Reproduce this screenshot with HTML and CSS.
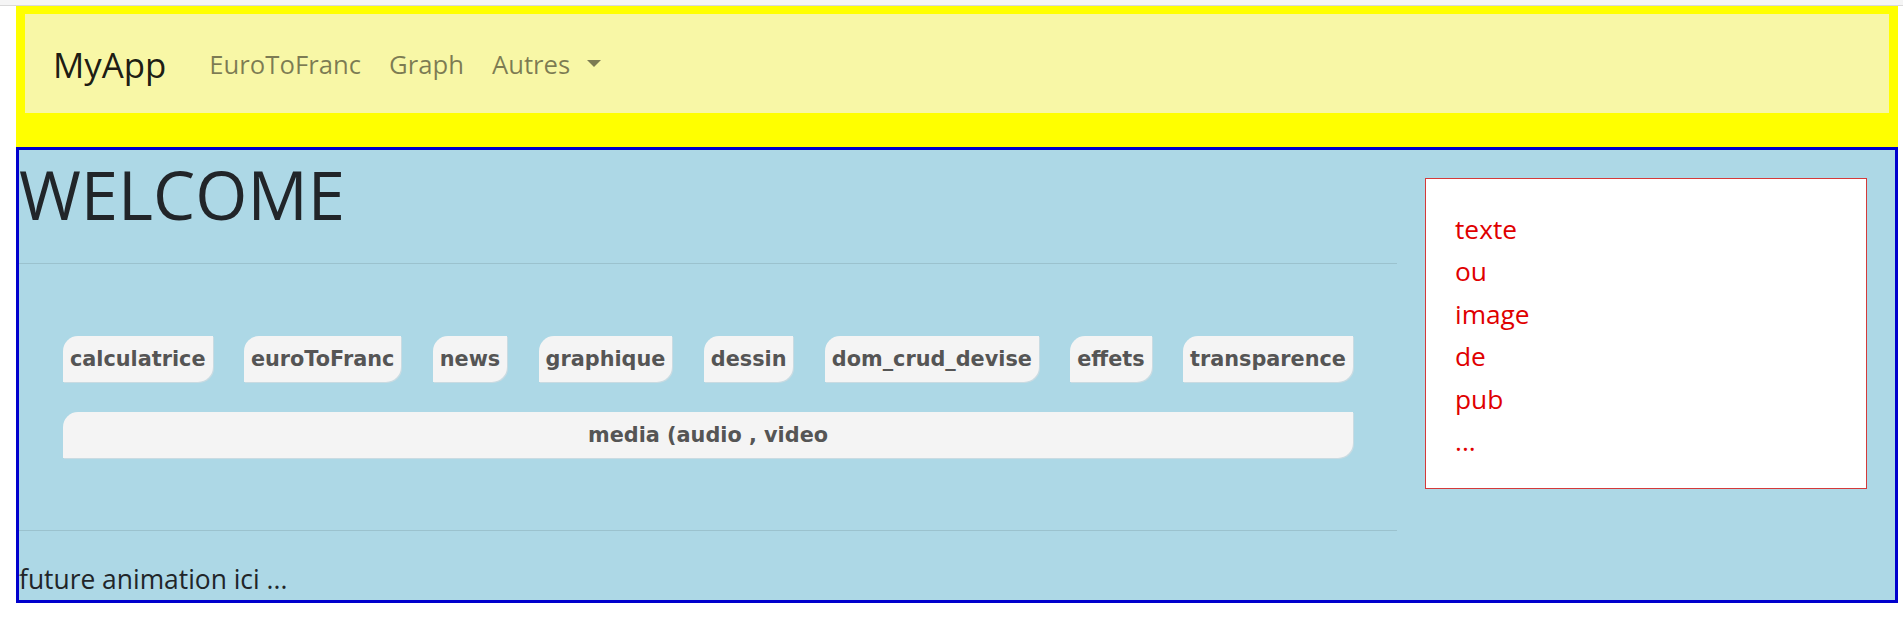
FILE: index.html
```html
<!DOCTYPE html>
<html lang="fr">
<head>
<meta charset="utf-8">
<title>MyApp</title>
<link rel="stylesheet" href="styles.css">
</head>
<body>
<div class="topstrip"></div>
<div class="page">
  <header class="header">
    <nav class="navbar">
      <a class="brand" href="#">MyApp</a>
      <a class="nav-link" href="#">EuroToFranc</a>
      <a class="nav-link" href="#">Graph</a>
      <a class="nav-link dropdown" href="#">Autres<span class="caret"></span></a>
    </nav>
  </header>
  <main class="main">
    <section class="left">
      <h1 class="title">WELCOME</h1>
      <hr class="sep sep-top">
      <div class="buttons">
        <div class="btn-row">
          <a class="btn" href="#">calculatrice</a>
          <a class="btn" href="#">euroToFranc</a>
          <a class="btn" href="#">news</a>
          <a class="btn" href="#">graphique</a>
          <a class="btn" href="#">dessin</a>
          <a class="btn" href="#">dom_crud_devise</a>
          <a class="btn" href="#">effets</a>
          <a class="btn" href="#">transparence</a>
        </div>
        <a class="btn btn-wide" href="#">media (audio , video</a>
      </div>
      <hr class="sep sep-bottom">
      <p class="future">future animation ici ...</p>
    </section>
    <aside class="right">
      <div class="pub">
        texte<br>ou<br>image<br>de<br>pub<br>...
      </div>
    </aside>
  </main>
</div>
</body>
</html>
```
FILE: styles.css
```css
html, body {
  margin: 0;
  padding: 0;
  background: #ffffff;
}
body {
  font-family: "Open Sans", "Noto Sans", sans-serif;
  color: #212529;
}
.topstrip {
  height: 5px;
  background: #f5f5f5;
  border-bottom: 1px solid #d9d9d9;
}
.page {
  margin: 0 5px 0 16px;
}
.header {
  background: #ffff00;
  padding: 8px 9px 34px 9px;
}
.navbar {
  height: 99px;
  background: #f8f7a6;
  display: flex;
  align-items: center;
  padding: 3px 28px 0 28px;
  box-sizing: border-box;
}
.navbar a {
  text-decoration: none;
}
.brand {
  font-size: 34.8px;
  color: rgba(0, 0, 0, 0.9);
  margin-right: 29px;
  line-height: 1.5;
}
.nav-link {
  font-size: 25.7px;
  color: rgba(0, 0, 0, 0.5);
  padding: 0 14px;
  line-height: 1.5;
}
.caret {
  display: inline-block;
  width: 0;
  height: 0;
  margin-left: 17px;
  vertical-align: 0.25em;
  border-top: 7px solid;
  border-left: 7.5px solid transparent;
  border-right: 7.5px solid transparent;
}
.main {
  background: #add8e6;
  border: 3px solid #0000cd;
  display: grid;
  grid-template-columns: 1378px 1fr;
}
.left {
  display: flex;
  flex-direction: column;
}
.title {
  margin: 0;
  padding-top: 3px;
  font-size: 67px;
  font-weight: 400;
  line-height: 82px;
  height: 82px;
  color: #212529;
}
.sep {
  border: 0;
  border-top: 1px solid rgba(0, 0, 0, 0.1);
  margin: 0;
}
.sep-top {
  margin-top: 28px;
}
.buttons {
  padding: 72px 44px;
  display: flex;
  flex-direction: column;
  gap: 30px;
}
.btn-row {
  display: flex;
  justify-content: space-between;
}
.btn {
  font-family: "DejaVu Sans", Verdana, sans-serif;
  font-weight: bold;
  font-size: 20.8px;
  line-height: 26px;
  color: #555555;
  background: #f4f4f4;
  text-decoration: none;
  padding: 10px 7px 10px 7px;
  border-radius: 15px 0 15px 0;
  box-shadow: 1px 1px 0 #c9dbe2;
}
.btn-wide {
  text-align: center;
}
.sep-bottom {
  margin-bottom: 28px;
}
.future {
  margin: 0;
  font-size: 26.4px;
  line-height: 41px;
}
.right {
  padding: 28px;
}
.pub {
  background: #ffffff;
  border: 1px solid #d43a3a;
  color: #e00000;
  font-size: 26.3px;
  line-height: 42.4px;
  padding: 29px 29px 26px 29px;
}
```
